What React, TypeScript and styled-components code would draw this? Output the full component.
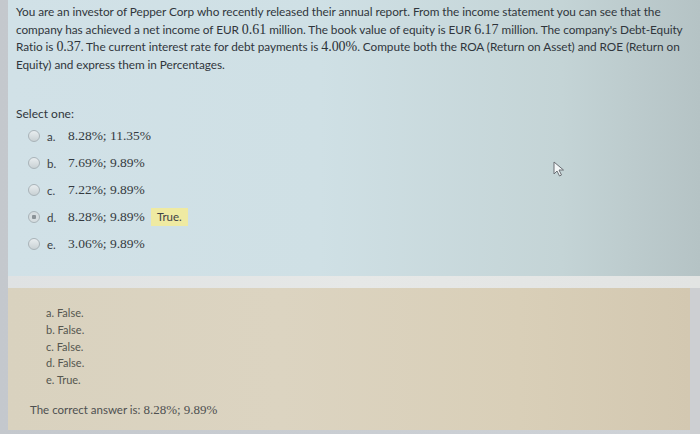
import React from 'react';
import styled, { createGlobalStyle } from 'styled-components';

const GlobalStyle = createGlobalStyle`
  html, body {
    margin: 0;
    padding: 0;
    background: #c6c9ce;
  }
  body {
    font-family: Lato, "Open Sans", sans-serif;
  }
`;

interface Option {
  letter: string;
  value: string;
  checked?: boolean;
  badge?: string;
}

const options: Option[] = [
  { letter: 'a.', value: '8.28%; 11.35%' },
  { letter: 'b.', value: '7.69%; 9.89%' },
  { letter: 'c.', value: '7.22%; 9.89%' },
  { letter: 'd.', value: '8.28%; 9.89%', checked: true, badge: 'True.' },
  { letter: 'e.', value: '3.06%; 9.89%' },
];

const feedback = ['a. False.', 'b. False.', 'c. False.', 'd. False.', 'e. True.'];

const App: React.FC = () => {
  return (
    <>
      <GlobalStyle />
      <Screen>
        <QuestionPanel>
          <QuestionText>
            <Line>You are an investor of Pepper Corp who recently released their annual report. From the income statement you can see that the</Line>
            <Line>
              company has achieved a net income of EUR <Num>0.61</Num> million. The book value of equity is EUR <Num>6.17</Num> million. The company's Debt-Equity
            </Line>
            <Line>
              Ratio is <Num>0.37</Num>. The current interest rate for debt payments is <Num>4.00%</Num>. Compute both the ROA (Return on Asset) and ROE (Return on
            </Line>
            <Line>Equity) and express them in Percentages.</Line>
          </QuestionText>
          <Prompt>Select one:</Prompt>
          <OptionList>
            {options.map((o) => (
              <OptionRow key={o.letter}>
                <Radio checked={!!o.checked} />
                <Letter>{o.letter}</Letter>
                <Value>{o.value}</Value>
                {o.badge && <Badge>{o.badge}</Badge>}
              </OptionRow>
            ))}
          </OptionList>
          <Cursor width="12" height="16" viewBox="0 0 12 16">
            <path d="M1 1 L1 13 L4 10 L6.5 15 L8.5 14 L6 9 L10.5 9 Z" fill="#f4f7f8" stroke="#6a6f74" strokeWidth="1" strokeLinejoin="round" />
          </Cursor>
        </QuestionPanel>
        <Divider />
        <FeedbackRow>
          <FeedbackPanel>
            <FeedbackList>
              {feedback.map((f) => (
                <FeedbackLine key={f}>{f}</FeedbackLine>
              ))}
            </FeedbackList>
            <CorrectAnswer>
              The correct answer is: <AnswerNum>8.28%; 9.89%</AnswerNum>
            </CorrectAnswer>
          </FeedbackPanel>
          <Edge />
        </FeedbackRow>
      </Screen>
    </>
  );
};

const Screen = styled.div`
  width: 700px;
  height: 434px;
  padding-left: 8px;
  box-sizing: border-box;
  display: flex;
  flex-direction: column;
  overflow: hidden;
  background: linear-gradient(90deg, #c4c8cd 0%, #cfd3d8 100%);
`;

const QuestionPanel = styled.div`
  position: relative;
  height: 276px;
  padding: 3px 0 0 8px;
  box-sizing: border-box;
  background: linear-gradient(90deg, #d1e1e7 0%, #cfe0e5 45%, #c4d4d6 80%, #b5c3c5 100%);
  color: #30363c;
`;

const QuestionText = styled.div`
  display: flex;
  flex-direction: column;
  font-size: 11.8px;
  letter-spacing: -0.05px;
`;

const Line = styled.div`
  height: 17.6px;
  line-height: 17.6px;
  white-space: nowrap;
`;

const Num = styled.span`
  font-family: "Liberation Serif", "DejaVu Serif", serif;
  font-size: 14px;
  line-height: 1;
  color: #2c3238;
`;

const Prompt = styled.div`
  margin-top: 33px;
  font-size: 12px;
  line-height: 16px;
`;

const OptionList = styled.div`
  display: flex;
  flex-direction: column;
  gap: 9px;
  margin-top: 5px;
  padding-left: 12px;
`;

const OptionRow = styled.div`
  display: flex;
  align-items: center;
  height: 18px;
`;

const Radio = styled.span<{ checked: boolean }>`
  width: 10px;
  height: 10px;
  border-radius: 50%;
  border: 1px solid #a9b3b8;
  background: ${(p) =>
    p.checked
      ? 'radial-gradient(circle, #8a9297 0 2px, #d6dde0 2.5px)'
      : 'linear-gradient(#e8edef, #c9d1d4)'};
  margin-right: 7px;
  flex-shrink: 0;
`;

const Letter = styled.span`
  font-size: 11.5px;
  width: 21px;
  color: #3a4045;
`;

const Value = styled.span`
  font-family: "Liberation Serif", "DejaVu Serif", serif;
  font-size: 13.5px;
  color: #343a40;
`;

const Badge = styled.span`
  margin-left: 6px;
  padding: 2px 6px;
  font-size: 11.5px;
  line-height: 14px;
  background: #efeaa2;
  color: #3e4146;
`;

const Cursor = styled.svg`
  position: absolute;
  left: 545px;
  top: 161px;
`;

const Divider = styled.div`
  height: 12px;
  background: linear-gradient(90deg, #dfe2e3 0%, #e6e8e7 50%, #e2e4e3 100%);
`;

const FeedbackRow = styled.div`
  display: flex;
  flex: 1;
`;

const FeedbackPanel = styled.div`
  flex: 1;
  margin-bottom: 4px;
  padding: 17px 0 0 22px;
  background: linear-gradient(90deg, #d9d2bf 0%, #dcd4c1 40%, #d9cfb8 75%, #d3c8b1 100%);
  color: #55564f;
`;

const FeedbackList = styled.div`
  display: flex;
  flex-direction: column;
  padding-left: 16px;
`;

const FeedbackLine = styled.div`
  font-size: 11px;
  line-height: 16.8px;
`;

const CorrectAnswer = styled.div`
  margin-top: 13px;
  font-size: 11.5px;
  color: #4e5050;
`;

const AnswerNum = styled.span`
  font-family: "Liberation Serif", "DejaVu Serif", serif;
  font-size: 13px;
`;

const Edge = styled.div`
  width: 10px;
  background: #cdcfd2;
`;

export default App;
